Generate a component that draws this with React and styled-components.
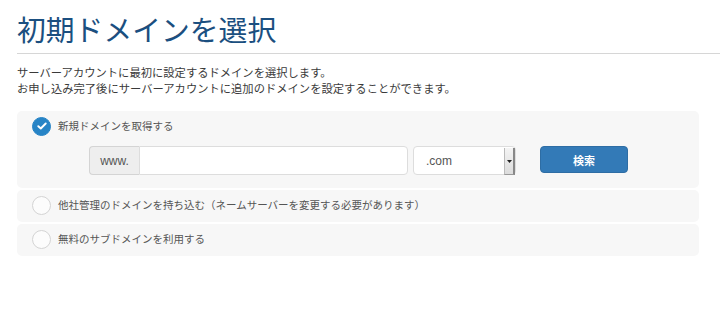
import React from 'react'
import styled, { createGlobalStyle } from 'styled-components'

const Global = createGlobalStyle`
  body {
    margin: 0;
    background: #fff;
    font-family: "Noto Sans CJK JP", "Noto Sans", sans-serif;
  }
`;

const options = [
  { id: 'new', label: '新規ドメインを取得する' },
  { id: 'other', label: '他社管理のドメインを持ち込む（ネームサーバーを変更する必要があります）' },
  { id: 'sub', label: '無料のサブドメインを利用する' },
];

function App() {
  const selected = 'new'
  return (
    <Page>
      <Global />
      <Title>初期ドメインを選択</Title>
      <Rule />
      <Lead>
        サーバーアカウントに最初に設定するドメインを選択します。<br />
        お申し込み完了後にサーバーアカウントに追加のドメインを設定することができます。
      </Lead>
      <Options>
        {options.map(o => (
          <Card key={o.id}>
            <OptionRow>
              <Radio checked={o.id === selected}>
                {o.id === selected && (
                  <svg width="10" height="8" viewBox="0 0 10 8">
                    <path d="M1.3 4.2 L3.8 6.5 L8.7 1.5" fill="none" stroke="#fff" strokeWidth="1.9" strokeLinecap="round" strokeLinejoin="round" />
                  </svg>
                )}
              </Radio>
              <Label>{o.label}</Label>
            </OptionRow>
            {o.id === selected && (
              <SearchRow>
                <InputGroup>
                  <Addon>www.</Addon>
                  <TextInput />
                </InputGroup>
                <Select>
                  <SelectValue>.com</SelectValue>
                  <SelectArrow>
                    <svg width="5" height="3" viewBox="0 0 5 3">
                      <path d="M0 0 L5 0 L2.5 3 Z" fill="#222" />
                    </svg>
                  </SelectArrow>
                </Select>
                <SearchButton>検索</SearchButton>
              </SearchRow>
            )}
          </Card>
        ))}
      </Options>
    </Page>
  )
}

const Page = styled.div`
  padding: 10px 0 0 17px;
`;

const Title = styled.h1`
  margin: 0;
  font-size: 28.8px;
  font-weight: 400;
  line-height: 38px;
  color: #1b4f80;
`;

const Rule = styled.div`
  height: 1px;
  background: #d6d6d6;
  margin-top: 5px;
`;

const Lead = styled.p`
  margin: 10px 0 0;
  font-size: 11.3px;
  line-height: 16px;
  color: #3a3a3a;
`;

const Options = styled.div`
  display: flex;
  flex-direction: column;
  gap: 2px;
  margin: 15px 21px 0 0;
`;

const Card = styled.div`
  background: #f7f7f7;
  border-radius: 5px;
  padding: 5px 0 7px 15px;
`;

const OptionRow = styled.div`
  display: flex;
  align-items: center;
  gap: 7px;
  height: 20px;
`;

const Radio = styled.span`
  box-sizing: border-box;
  width: 19px;
  height: 19px;
  border-radius: 50%;
  display: flex;
  align-items: center;
  justify-content: center;
  background: ${p => (p.checked ? '#2784c6' : '#fcfcfc')};
  border: 1px solid ${p => (p.checked ? '#2784c6' : '#d4d4d4')};
  flex: none;
`;

const Label = styled.span`
  font-size: 10.5px;
  color: #555;
  line-height: 16px;
`;

const SearchRow = styled.div`
  display: flex;
  align-items: flex-start;
  margin: 10px 0 6px 57px;
`;

const InputGroup = styled.div`
  display: flex;
  height: 29px;
`;

const Addon = styled.div`
  box-sizing: border-box;
  width: 50px;
  display: flex;
  align-items: center;
  justify-content: center;
  background: #eee;
  border: 1px solid #d4d4d4;
  border-right: none;
  border-radius: 4px 0 0 4px;
  font-family: "Liberation Sans", Arial, sans-serif;
  font-size: 12px;
  color: #555;
`;

const TextInput = styled.div`
  box-sizing: border-box;
  width: 269px;
  background: #fff;
  border: 1px solid #ddd;
  border-radius: 0 4px 4px 0;
`;

const Select = styled.div`
  box-sizing: border-box;
  display: flex;
  width: 103px;
  height: 29px;
  margin-left: 5px;
  background: #fff;
  border: 1px solid #ddd;
  border-radius: 4px;
`;

const SelectValue = styled.span`
  flex: 1;
  display: flex;
  align-items: center;
  padding-left: 12px;
  font-family: "Liberation Sans", Arial, sans-serif;
  font-size: 12px;
  color: #555;
`;

const SelectArrow = styled.span`
  box-sizing: border-box;
  width: 11px;
  margin: 1px 0 -1px;
  display: flex;
  align-items: center;
  justify-content: center;
  background: linear-gradient(#f4f4f4, #dcdcdc);
  border-left: 1px solid #bbb;
  border-right: 2px solid #888;
  border-bottom: 1px solid #999;
`;

const SearchButton = styled.button`
  box-sizing: border-box;
  width: 88px;
  height: 27px;
  margin-left: 24px;
  background: #337ab7;
  border: 1px solid #2e6da4;
  border-radius: 4px;
  color: #fff;
  font-family: inherit;
  font-size: 11px;
  font-weight: 700;
  padding: 0;
`;

export default App
